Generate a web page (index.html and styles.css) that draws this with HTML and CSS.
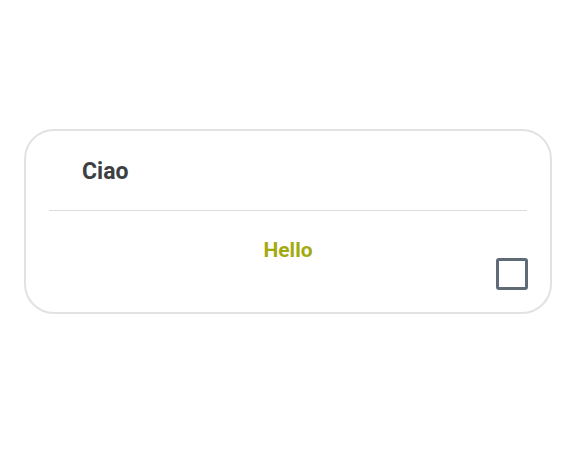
FILE: index.html
```html
<!DOCTYPE html>
<html>
<head>
<meta charset="utf-8">
<link rel="stylesheet" href="styles.css">
</head>
<body>
<div class="page">
  <div class="card">
    <div class="header">Ciao</div>
    <div class="divider"></div>
    <div class="body">
      <div class="hello">Hello</div>
      <div class="check"></div>
    </div>
  </div>
</div>
</body>
</html>
```
FILE: styles.css
```css
html, body { margin: 0; padding: 0; background: #fff; }
body { font-family: Roboto, "Noto Sans", sans-serif; }
.page { padding: 129px 24px 0 24px; }
.card {
  box-sizing: border-box;
  width: 528px;
  height: 185px;
  border: 2px solid #e2e2e2;
  border-radius: 30px;
  background: #fff;
  display: flex;
  flex-direction: column;
}
.header {
  height: 79px;
  display: flex;
  align-items: center;
  padding-left: 56px;
  padding-top: 1px;
  box-sizing: border-box;
  font-size: 23px;
  font-weight: 700;
  color: #3c4043;
}
.divider { height: 1px; background: #dcdcdc; margin: 0 23px; }
.body {
  flex: 1;
  display: grid;
  padding: 27px 22px 22px 22px;
}
.hello {
  grid-area: 1 / 1;
  align-self: start;
  justify-self: center;
  font-size: 21px;
  line-height: 24px;
  font-weight: 700;
  color: #a3aa10;
}
.check {
  grid-area: 1 / 1;
  align-self: end;
  justify-self: end;
  box-sizing: border-box;
  width: 32px;
  height: 32px;
  border: 3px solid #5f6b76;
  border-radius: 3px;
}
```
